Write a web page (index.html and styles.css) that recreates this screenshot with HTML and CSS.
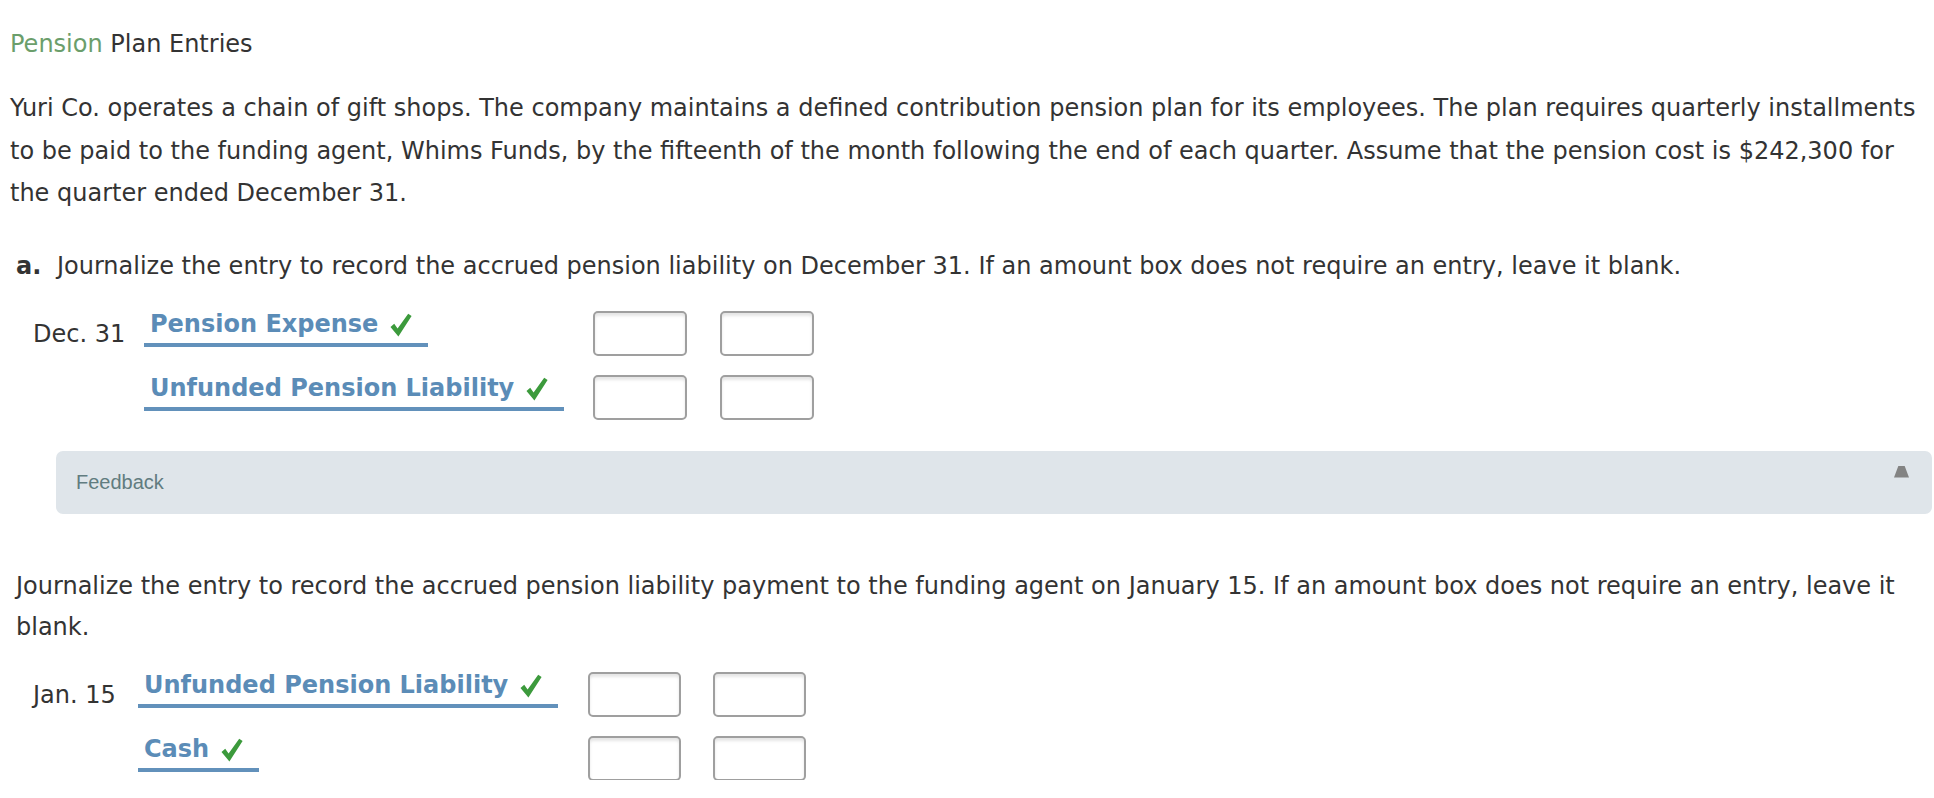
FILE: index.html
```html
<!DOCTYPE html>
<html lang="en">
<head>
<meta charset="utf-8">
<title>Pension Plan Entries</title>
<link rel="stylesheet" href="styles.css">
</head>
<body>
<div class="page">
  <h1 class="title"><span class="title-topic">Pension</span> Plan Entries</h1>
  <p class="intro">Yuri Co. operates a chain of gift shops. The company maintains a defined contribution pension plan for its employees. The plan requires quarterly installments to be paid to the funding agent, Whims Funds, by the fifteenth of the month following the end of each quarter. Assume that the pension cost is $242,300 for the quarter ended December 31.</p>

  <p class="question question-a"><b class="q-label">a.</b> Journalize the entry to record the accrued pension liability on December 31. If an amount box does not require an entry, leave it blank.</p>

  <div class="journal journal-a">
    <div class="j-date">Dec. 31</div>
    <div class="j-account"><span class="acct">Pension Expense<svg class="check" viewBox="0 0 22 24"><path d="M0.5 14 L4.2 10.8 L7.6 15.4 L18.2 0.8 L21.6 3 L8.4 23.4 Z" /></svg></span></div>
    <div class="j-box"></div>
    <div class="j-box"></div>

    <div class="j-date"></div>
    <div class="j-account"><span class="acct">Unfunded Pension Liability<svg class="check" viewBox="0 0 22 24"><path d="M0.5 14 L4.2 10.8 L7.6 15.4 L18.2 0.8 L21.6 3 L8.4 23.4 Z" /></svg></span></div>
    <div class="j-box"></div>
    <div class="j-box"></div>
  </div>

  <div class="feedback">
    <span class="feedback-label">Feedback</span>
    <span class="feedback-toggle"></span>
  </div>

  <p class="question question-b">Journalize the entry to record the accrued pension liability payment to the funding agent on January 15. If an amount box does not require an entry, leave it blank.</p>

  <div class="journal journal-b">
    <div class="j-date">Jan. 15</div>
    <div class="j-account"><span class="acct">Unfunded Pension Liability<svg class="check" viewBox="0 0 22 24"><path d="M0.5 14 L4.2 10.8 L7.6 15.4 L18.2 0.8 L21.6 3 L8.4 23.4 Z" /></svg></span></div>
    <div class="j-box"></div>
    <div class="j-box"></div>

    <div class="j-date"></div>
    <div class="j-account"><span class="acct">Cash<svg class="check" viewBox="0 0 22 24"><path d="M0.5 14 L4.2 10.8 L7.6 15.4 L18.2 0.8 L21.6 3 L8.4 23.4 Z" /></svg></span></div>
    <div class="j-box"></div>
    <div class="j-box"></div>
  </div>
</div>
</body>
</html>
```

FILE: styles.css
```css
html, body {
  margin: 0;
  padding: 0;
  background: #ffffff;
}

.page {
  padding: 23px 2px 0 10px;
  font-family: "DejaVu Sans", Verdana, sans-serif;
  font-size: 24px;
  color: #333333;
}

.title {
  margin: 0;
  font-size: 24px;
  font-weight: normal;
  line-height: 42px;
  color: #333333;
}

.title-topic {
  color: #6b9e6b;
}

.intro {
  margin: 22px 0 0 0;
  line-height: 42.5px;
}

.question {
  margin: 0;
  padding-left: 6px;
}

.question-a {
  margin-top: 30px;
  line-height: 42px;
}

.q-label {
  font-weight: bold;
  margin-right: 8px;
}

.journal {
  display: grid;
  grid-auto-rows: 44px;
  row-gap: 20px;
  margin-left: 23px;
}

.journal-a {
  margin-top: 24px;
  grid-template-columns: 111px 449px 94px 94px;
}

.journal-a .j-box:nth-child(4n) {
  margin-left: 33px;
}

.journal-b {
  margin-top: 23px;
  grid-template-columns: 105px 450px 93px 93px;
}

.journal-b .j-box:nth-child(4n) {
  margin-left: 32px;
}

.j-date {
  align-self: center;
  line-height: 44px;
  padding-top: 2px;
  white-space: nowrap;
}

.j-account {
  align-self: end;
  margin-bottom: 8px;
}

.acct {
  display: inline-flex;
  align-items: center;
  padding: 0 16px 4px 6px;
  line-height: 30px;
  font-weight: bold;
  color: #5b8cb7;
  border-bottom: 4px solid #6291bb;
  white-space: nowrap;
}

.check {
  width: 22px;
  height: 24px;
  margin-left: 12px;
  margin-top: 2px;
  fill: #3c9a3c;
}

.j-box {
  box-sizing: border-box;
  width: 94px;
  height: 45px;
  border: 2px solid #9f9f9f;
  border-radius: 5px;
  background: #ffffff;
  box-shadow: inset 0 3px 3px rgba(0, 0, 0, 0.10);
}

.journal-b .j-box {
  width: 93px;
}

.feedback {
  display: flex;
  justify-content: space-between;
  align-items: center;
  box-sizing: border-box;
  height: 63px;
  margin: 32px 0 0 46px;
  padding: 0 23px 0 20px;
  background: #dfe5ea;
  border-radius: 7px;
}

.feedback-label {
  font-family: "Liberation Sans", Arial, sans-serif;
  font-size: 20px;
  color: #617c80;
}

.feedback-toggle {
  align-self: flex-start;
  margin-top: 15px;
  width: 15px;
  height: 12px;
  background: #838383;
  clip-path: polygon(30% 0, 70% 0, 100% 100%, 0 100%);
}

.question-b {
  margin-top: 52px;
  line-height: 41.5px;
}
```
